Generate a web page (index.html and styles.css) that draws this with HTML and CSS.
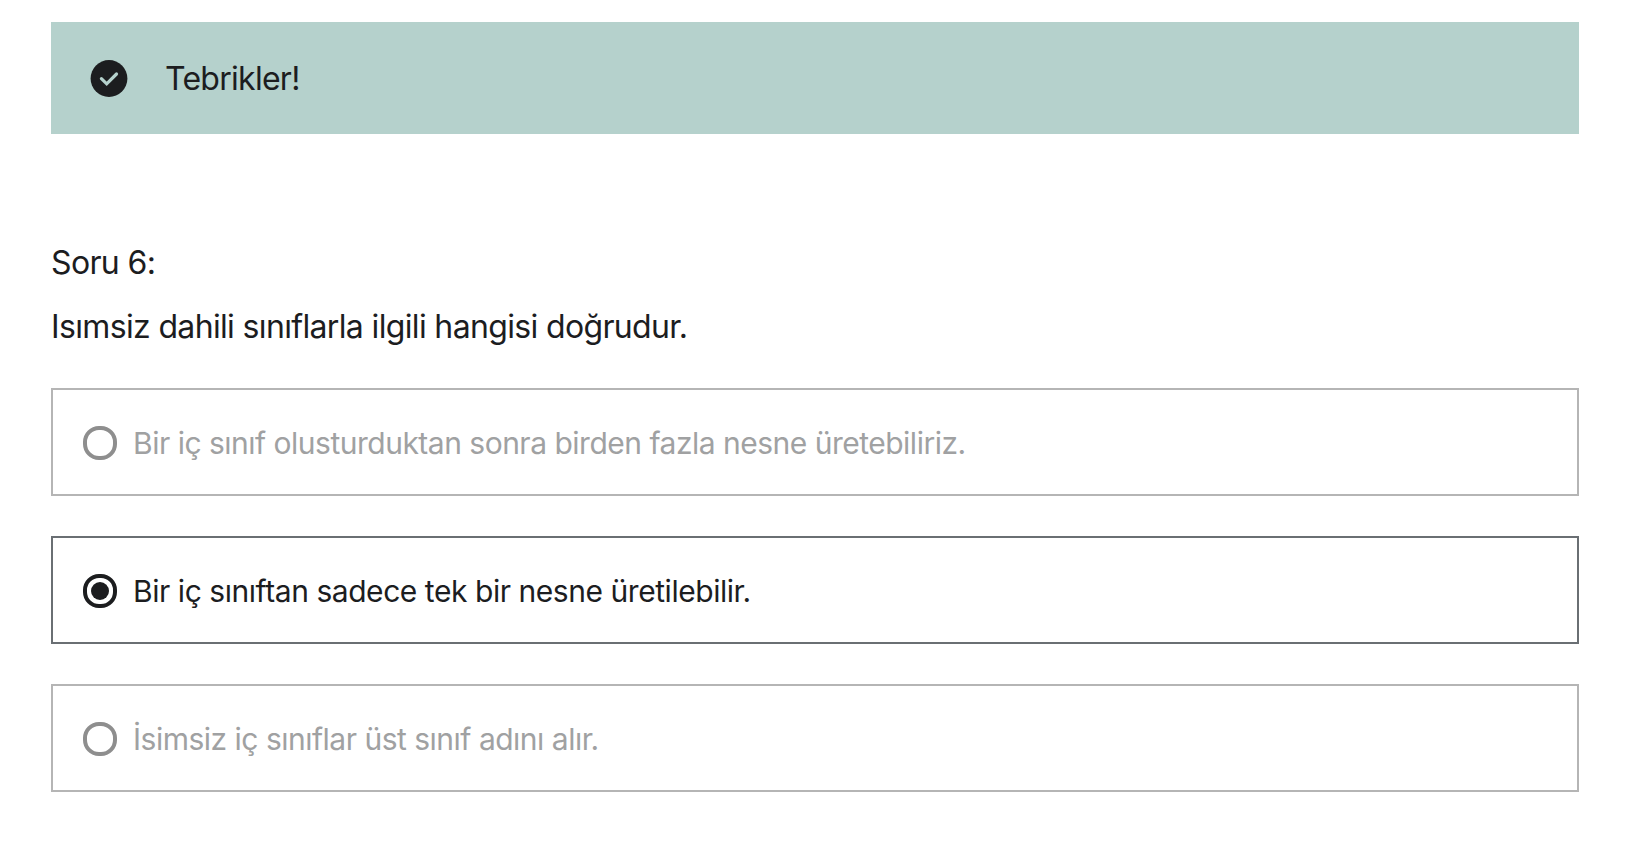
FILE: index.html
```html
<!DOCTYPE html>
<html lang="tr">
<head>
<meta charset="utf-8">
<title>Soru 6</title>
<link rel="stylesheet" href="styles.css">
</head>
<body>
<main class="quiz">
  <div class="alert">
    <svg class="alert-icon" viewBox="0 0 38 38" aria-hidden="true">
      <circle cx="19" cy="19.5" r="18.4" fill="#1c1d1f"/>
      <path d="M11.4 19.7 L16.7 24.8 L26.5 15" fill="none" stroke="#b5d1cc" stroke-width="3.2" stroke-linecap="round" stroke-linejoin="miter"/>
    </svg>
    <span class="alert-text">Tebrikler!</span>
  </div>
  <section class="question">
    <div class="question-label">Soru 6:</div>
    <div class="question-text">Isımsiz dahili sınıflarla ilgili hangisi doğrudur.</div>
  </section>
  <div class="answers">
    <div class="answer">
      <span class="radio"></span>
      <span class="answer-text">Bir iç sınıf olusturduktan sonra birden fazla nesne üretebiliriz.</span>
    </div>
    <div class="answer selected">
      <span class="radio"></span>
      <span class="answer-text answer-text-selected">Bir iç sınıftan sadece tek bir nesne üretilebilir.</span>
    </div>
    <div class="answer">
      <span class="radio"></span>
      <span class="answer-text">İsimsiz iç sınıflar üst sınıf adını alır.</span>
    </div>
  </div>
</main>
</body>
</html>
```
FILE: styles.css
```css
* { box-sizing: border-box; }
body {
  margin: 0;
  background: #fff;
  color: #1c1d1f;
  font-family: Inter, "Liberation Sans", sans-serif;
  font-size: 32px;
  line-height: 48px;
}
.quiz { padding: 22px 67px 60px 51px; }
.alert {
  display: flex;
  align-items: center;
  gap: 37px;
  height: 112px;
  padding-left: 39px;
  background: #b5d1cc;
}
.alert-icon { width: 38px; height: 38px; flex: none; }
.alert-text { padding-top: 2px; letter-spacing: -0.73px; }
.question {
  display: flex;
  flex-direction: column;
  gap: 16px;
  padding: 105px 0 37px;
}
.question-label,
.question-text { white-space: nowrap; letter-spacing: -0.65px; }
.answers { display: flex; flex-direction: column; gap: 40px; }
.answer {
  display: flex;
  align-items: center;
  gap: 16px;
  height: 108px;
  padding: 2px 30px 0;
  border: 2px solid #b5b5b5;
  color: #a0a1a2;
  font-size: 30px;
  line-height: 42px;
}
.answer-text { white-space: nowrap; letter-spacing: -0.5px; }
.answer-text-selected { letter-spacing: -0.45px; }
.radio {
  flex: none;
  display: grid;
  place-items: center;
  width: 34px;
  height: 34px;
  border: 4px solid #8e8e8e;
  border-radius: 16px;
}
.selected { border-color: #6a6f73; color: #1c1d1f; }
.selected .radio { border-color: #1c1d1f; }
.selected .radio::after {
  content: "";
  width: 18px;
  height: 18px;
  border-radius: 50%;
  background: #1c1d1f;
}
```
